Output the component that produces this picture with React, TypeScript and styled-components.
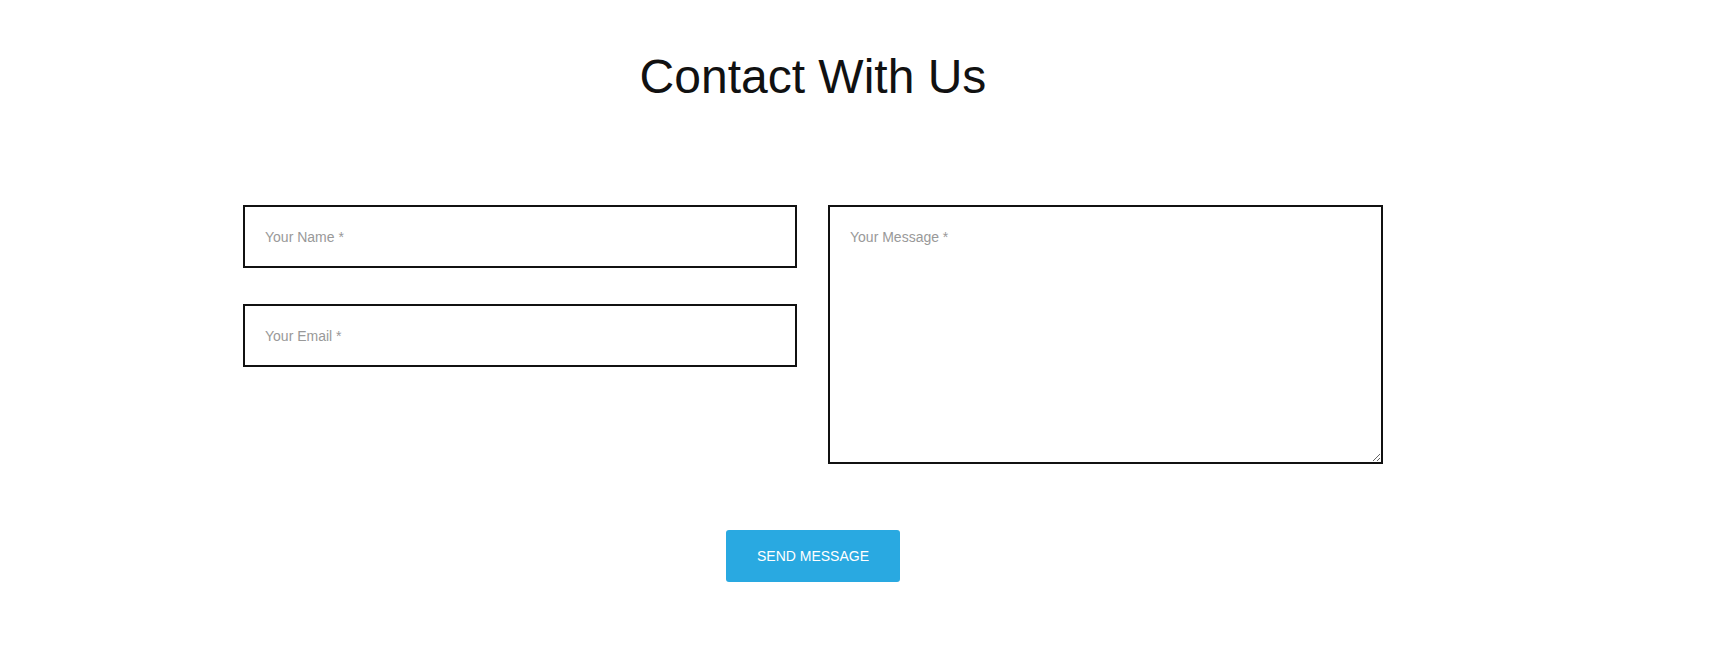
import React from "react";
import styled, { createGlobalStyle } from "styled-components";

const GlobalStyle = createGlobalStyle`
  html, body {
    margin: 0;
    padding: 0;
    background: #ffffff;
    font-family: "Liberation Sans", Arial, sans-serif;
  }
  * { box-sizing: border-box; }
`;

const Page = styled.main`
  width: 100%;
  min-height: 652px;
  padding: 49px 98px 0 0;
`;

const Content = styled.section`
  width: 1140px;
  margin: 0 auto;
  display: flex;
  flex-direction: column;
  align-items: center;
`;

const Title = styled.h1`
  margin: 0;
  font-family: "Liberation Sans", Arial, sans-serif;
  font-size: 48px;
  font-weight: 400;
  line-height: normal;
  color: #111111;
`;

const Form = styled.form`
  width: 100%;
  margin-top: 101px;
  display: flex;
  flex-direction: column;
  align-items: center;
`;

const Grid = styled.div`
  width: 100%;
  display: grid;
  grid-template-columns: 554px 555px;
  column-gap: 31px;
`;

const Column = styled.div`
  display: flex;
  flex-direction: column;
  gap: 36px;
`;

const fieldStyles = `
  width: 100%;
  border: 2px solid #111111;
  border-radius: 0;
  background: #ffffff;
  font-family: "Liberation Sans", Arial, sans-serif;
  font-size: 14px;
  color: #333333;
  outline: none;
  &::placeholder { color: #999999; opacity: 1; }
`;

const Input = styled.input`
  ${fieldStyles}
  height: 63px;
  padding: 0 20px;
`;

const TextArea = styled.textarea`
  ${fieldStyles}
  display: block;
  height: 259px;
  padding: 22px 20px;
  resize: vertical;
  line-height: normal;
  margin: 0;
`;

const SubmitButton = styled.button`
  margin-top: 66px;
  width: 174px;
  height: 52px;
  border: none;
  border-radius: 3px;
  background: #29a9e1;
  color: #ffffff;
  font-family: "Liberation Sans", Arial, sans-serif;
  font-size: 14px;
  text-transform: uppercase;
  cursor: pointer;
`;

export default function App() {
  return (
    <>
      <GlobalStyle />
      <Page>
        <Content>
          <Title>Contact With Us</Title>
          <Form onSubmit={(e) => e.preventDefault()}>
            <Grid>
              <Column>
                <Input type="text" placeholder="Your Name *" />
                <Input type="email" placeholder="Your Email *" />
              </Column>
              <TextArea placeholder="Your Message *" />
            </Grid>
            <SubmitButton type="submit">Send Message</SubmitButton>
          </Form>
        </Content>
      </Page>
    </>
  );
}
